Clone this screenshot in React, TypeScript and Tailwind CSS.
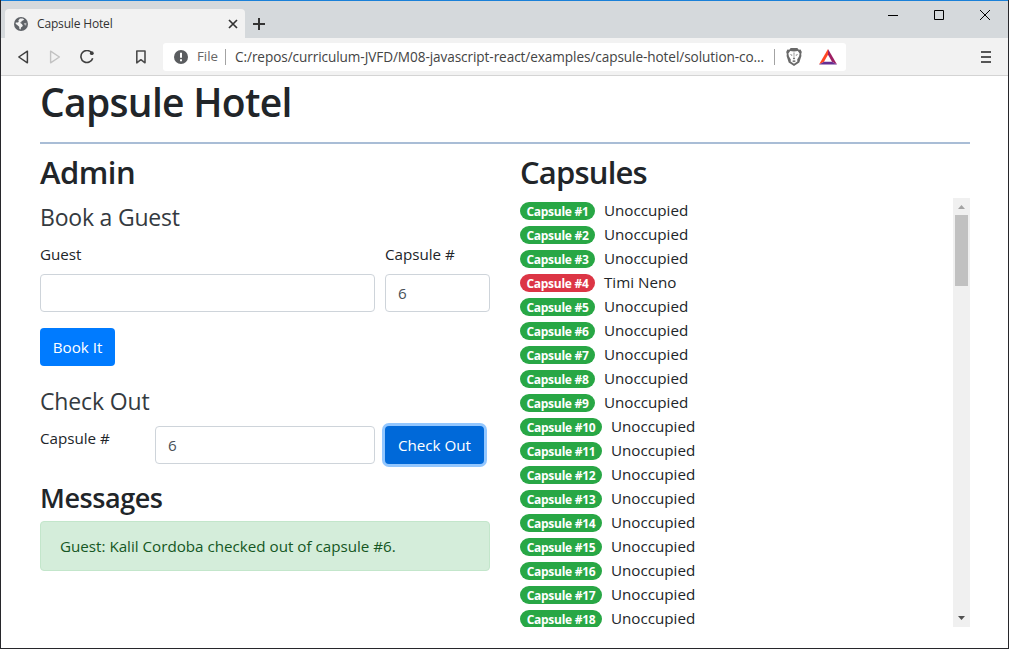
import React from "react";

const GUESTS: Record<number, string> = { 4: "Timi Neno" };

function Globe() {
  return (
    <svg width="14" height="14" viewBox="0 0 14 14">
      <circle cx="7" cy="7" r="7" fill="#5f6368" />
      <path d="M6 1.6 8.6 1.4 10.2 2.6 9 3.6 7.6 4 7.4 5.2 5.8 5.8 7.6 6.8 8.8 8.2 8.4 9.6 7 10.4 6.6 12.4 5.4 12 5.2 9.8 3.8 8.6 1.6 6.8 1.8 5.4 4 5.6 4.8 4.4 4.4 3.2Z" fill="#f2f2f2" />
      <path d="M9.8 6.2 12.4 5.8 12.2 8.6 10.8 8.2Z" fill="#f2f2f2" opacity=".6" />
    </svg>
  );
}

function Browser() {
  return (
    <header className="shrink-0">
      <div className="flex h-[38px] border-t border-[#1a80d8] bg-[#d5d9dc]">
        <div className="ml-1 mt-2 flex h-[29px] w-[240px] items-center rounded-t-[4px] bg-[#f2f2f2] pl-[9px] pr-[7px]">
          <Globe />
          <span className="ml-[9px] flex-1 text-[12px] tracking-[-0.16px] text-[#333]">Capsule Hotel</span>
          <svg width="10" height="10" viewBox="0 0 10 10" stroke="#333" strokeWidth="1.7">
            <path d="M1 1 9 9M9 1 1 9" />
          </svg>
        </div>
        <svg className="ml-2 mt-[17px]" width="12" height="12" viewBox="0 0 12 12" stroke="#333" strokeWidth="2">
          <path d="M6 0V12M0 6H12" />
        </svg>
        <div className="ml-auto mr-[18px] mt-[9px] flex h-[10px] gap-9">
          <svg width="10" height="10" stroke="#000"><path d="M0 5.5H10" /></svg>
          <svg width="10" height="10" stroke="#000" fill="none"><path d="M.5.5H9.5V9.5H.5Z" /></svg>
          <svg width="10" height="10" stroke="#000"><path d="M0 0 10 10M10 0 0 10" /></svg>
        </div>
      </div>
      <div className="flex h-[38px] items-center border-b border-[#d4d4d4] bg-[#f2f2f2] pl-4">
        <svg width="12" height="14" viewBox="0 0 12 14" fill="none" stroke="#3f3f3f" strokeWidth="1.5" strokeLinejoin="round">
          <path d="M10.4 1.2V12.8L1.8 7Z" />
        </svg>
        <svg className="ml-[20px]" width="12" height="14" viewBox="0 0 12 14" fill="none" stroke="#c2c2c2" strokeWidth="1.4" strokeLinejoin="round">
          <path d="M1.6 1.2V12.8L10.4 7Z" />
        </svg>
        <svg className="ml-[19px]" width="15" height="14" viewBox="0 0 15 14" fill="none" stroke="#3f3f3f" strokeWidth="1.6">
          <path d="M11.8 3A6 6 0 1 0 12.7 8.2" />
          <circle cx="11.8" cy="3.2" r="1.9" fill="#3f3f3f" stroke="none" />
          <path d="M11.8 3V4.6" />
        </svg>
        <svg className="ml-10" width="12" height="14" viewBox="0 0 12 14" fill="none" stroke="#4c4c4c" strokeWidth="1.6" strokeLinejoin="round">
          <path d="M1.8 1H10V12.8L5.9 9.7 1.8 12.8Z" />
        </svg>
        <div className="ml-4 flex h-7 w-[683px] items-center rounded-[3px] bg-white pl-[11px] text-[13.3px]">
          <svg width="14" height="14" viewBox="0 0 14 14">
            <circle cx="7" cy="7" r="7" fill="#5a5c5f" />
            <path d="M6 2.7H8V7.8H6ZM6 9.2H8V11.2H6Z" fill="#fff" />
          </svg>
          <span className="ml-[9px] mt-px w-[28px] text-[#666]">File</span>
          <span className="h-4 w-px bg-[#a3a3a3]" />
          <span className="ml-[9px] mt-px w-[539px] whitespace-nowrap text-[13.6px] tracking-[-0.08px] text-[#444]">
            C:/repos/curriculum-JVFD/M08-javascript-react/examples/capsule-hotel/solution-co...
          </span>
          <span className="h-4 w-px bg-[#a3a3a3]" />
          <svg className="ml-[11px]" width="16" height="18" viewBox="0 0 16 18">
            <path d="M4.7 0H11.3L12.8 1.7 14.6 1.6 15.8 4 15.2 6 15.4 8 13.3 14.6 8 18 2.7 14.6.6 8 .8 6 .2 4 1.4 1.6 3.2 1.7Z" fill="#696969" />
            <path d="M4.2 3 8 3.6 11.8 3 13.6 5.6 13.1 8.2 11.2 11.4 11.4 13.4 8 15.8 4.6 13.4 4.8 11.4 2.9 8.2 2.4 5.6Z" fill="#fff" />
            <path d="M3.8 6.1 6.6 6.9 5.6 7.8ZM12.2 6.1 9.4 6.9 10.4 7.8ZM7.6 4.4H8.4L8.2 9.4 9.2 10.4 8 11.4 6.8 10.4 7.8 9.4ZM6 13 8 12.3 10 13 8 14.2Z" fill="#696969" />
          </svg>
          <svg className="ml-[17px]" width="18" height="16" viewBox="0 0 18 16">
            <path d="M9 0 0 15.5 5 12.7 9 5.8Z" fill="#ff4724" />
            <path d="M9 0V5.8L13 12.7 18 15.5Z" fill="#9e1f63" />
            <path d="M0 15.5 5 12.7H13L18 15.5Z" fill="#662d91" />
          </svg>
        </div>
        <svg className="ml-auto mr-[17px]" width="10" height="12" viewBox="0 0 10 12" fill="#555">
          <path d="M0 0H10V2H0ZM0 5H10V7H0ZM0 10H10V12H0Z" />
        </svg>
      </div>
    </header>
  );
}

function Admin() {
  const field = "flex h-[38px] items-center rounded border border-[#ced4da] bg-white px-3 text-[#495057]";
  return (
    <section className="w-[450px]">
      <h2 className="h-[38px] text-[31px] font-semibold leading-[38px] tracking-[-0.5px]">Admin</h2>
      <h4 className="mt-[12px] h-[29px] text-[23px] leading-[29px] tracking-[-0.2px] text-[#343a40]">Book a Guest</h4>
      <div className="mt-[10px] flex h-[70px] gap-[10px]">
        <label className="w-[335px] leading-6">
          Guest
          <div className={field + " mt-[8px]"} />
        </label>
        <label className="w-[105px] leading-6">
          Capsule #
          <div className={field + " mt-[8px]"}>6</div>
        </label>
      </div>
      <button className="mt-4 block h-[38px] w-[75px] whitespace-nowrap rounded bg-[#007bff] text-white">Book It</button>
      <h4 className="mt-[21px] h-[29px] text-[23px] leading-[29px] tracking-[-0.15px] text-[#343a40]">Check Out</h4>
      <div className="mt-[10px] flex h-[38px] gap-[10px]">
        <label className="w-[105px] leading-6">Capsule #</label>
        <div className={field + " w-[220px]"}>6</div>
        <button className="w-[99px] whitespace-nowrap rounded bg-[#0069d9] text-white shadow-[0_0_0_3px_#93c7ff]">Check Out</button>
      </div>
      <h3 className="mt-[17px] h-[34px] text-[27px] font-semibold leading-[34px] tracking-[-0.45px]">Messages</h3>
      <div className="mt-[6px] flex h-[50px] items-center rounded border border-[#c3e6cb] bg-[#d4edda] pl-[19px] text-[#155724]">
        Guest: Kalil Cordoba checked out of capsule #6.
      </div>
    </section>
  );
}

function Capsules() {
  return (
    <section className="w-[450px]">
      <h2 className="h-[38px] text-[31px] font-semibold leading-[38px] tracking-[-0.8px]">Capsules</h2>
      <div className="mt-[7px] flex h-[429px] overflow-hidden">
        <ul className="flex-1">
          {Array.from({ length: 18 }, (_, i) => i + 1).map((n) => (
            <li key={n} className="flex h-6 items-center">
              <span
                className={
                  "mt-[2px] flex h-[18px] items-center justify-center rounded-full pt-px text-[12px] font-bold tracking-[-0.28px] text-white " +
                  (n > 9 ? "w-[82px] " : "w-[75px] ") +
                  (GUESTS[n] ? "bg-[#dc3545]" : "bg-[#28a745]")
                }
              >
                Capsule #{n}
              </span>
              <span className="ml-[9px]">{GUESTS[n] ?? "Unoccupied"}</span>
            </li>
          ))}
        </ul>
        <div className="flex w-[17px] flex-col items-center bg-[#f0f0f0]">
          <svg className="mt-[7px]" width="7" height="4" viewBox="0 0 7 4" fill="#a3a3a3"><path d="M0 4 3.5 0 7 4Z" /></svg>
          <div className="mt-[6px] h-[71px] w-[13px] bg-[#c1c1c1]" />
          <svg className="mb-[7px] mt-auto" width="7" height="4" viewBox="0 0 7 4" fill="#505050"><path d="M0 0 3.5 4 7 0Z" /></svg>
        </div>
      </div>
    </section>
  );
}

export default function App() {
  return (
    <div className="flex h-[649px] w-[1009px] flex-col overflow-hidden border-x border-b border-[#27272b] bg-white font-['Open_Sans','Noto_Sans',sans-serif] text-[15.2px] font-normal tracking-[-0.01px] text-[#212529]">
      <Browser />
      <main className="flex flex-1 flex-col pl-[39px] pr-[38px]">
        <h1 className="mt-[2px] h-12 text-[39px] font-semibold leading-[48px] tracking-[-0.7px]">Capsule Hotel</h1>
        <div className="mt-4 h-[2px] w-[930px] bg-[#a9bdd6]" />
        <div className="mt-[9px] flex gap-[30px]">
          <Admin />
          <Capsules />
        </div>
      </main>
    </div>
  );
}
